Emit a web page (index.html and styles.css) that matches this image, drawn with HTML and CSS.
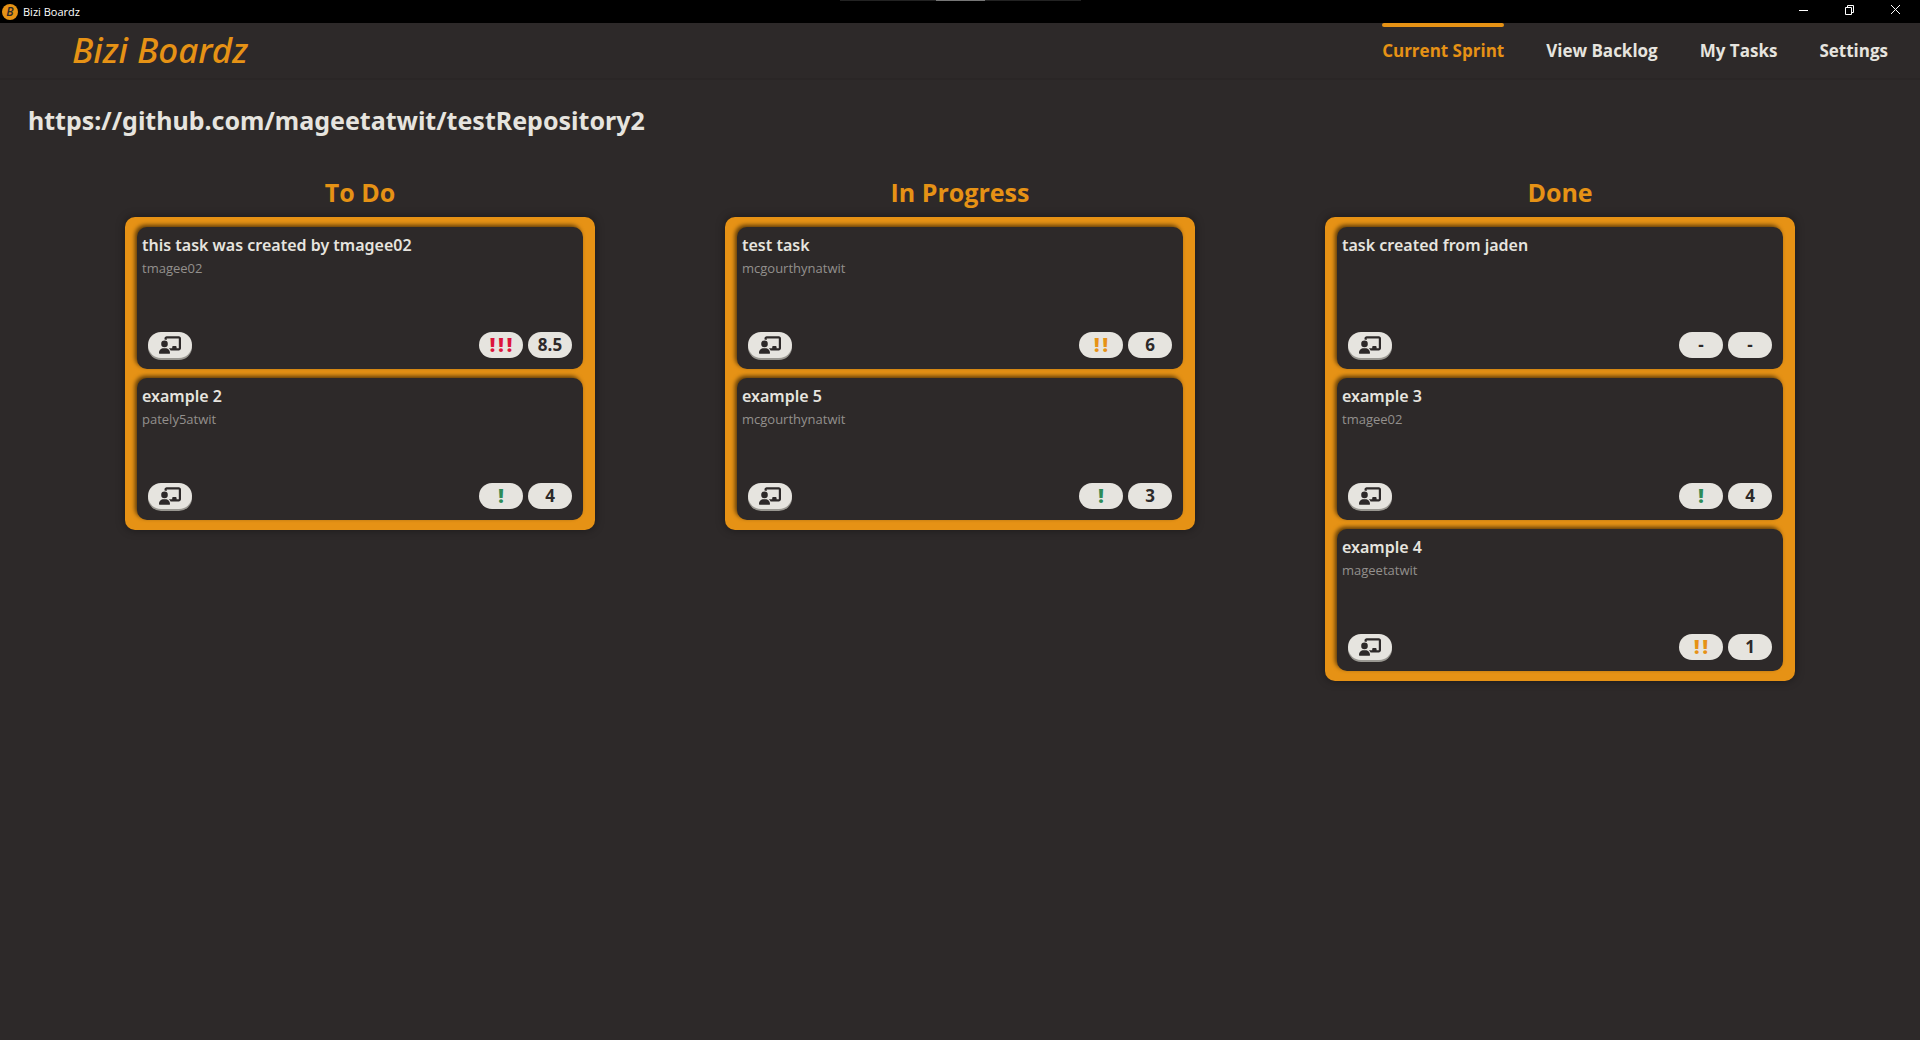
FILE: index.html
```html
<!DOCTYPE html>
<html lang="en">
<head>
<meta charset="utf-8">
<title>Bizi Boardz</title>
<link rel="stylesheet" href="styles.css">
</head>
<body>
<svg class="sprite" aria-hidden="true">
  <symbol id="assign" viewBox="0 0 640 512"><path d="M160 64c0-35.300 28.700-64 64-64H576c35.300 0 64 28.700 64 64V352c0 35.300-28.700 64-64 64H336.800c-11.800-25.500-29.900-47.500-52.400-64H384V320c0-17.700 14.300-32 32-32h64c17.700 0 32 14.300 32 32v32h64V64L224 64v49.100C205.200 102.200 183.300 96 160 96V64zm0 64a96 96 0 1 1 0 192 96 96 0 1 1 0-192zM133.300 352h53.300C260.300 352 320 411.700 320 485.300c0 14.700-11.900 26.700-26.700 26.700H26.700C11.900 512 0 500.100 0 485.300C0 411.700 59.700 352 133.300 352z"/></symbol>
</svg>
<div class="titlebar">
  <span class="app-icon">B</span>
  <span class="app-name">Bizi Boardz</span>
  <div class="drag-handle"></div>
  <div class="window-controls">
    <button type="button" aria-label="Minimize"><svg width="11" height="11" viewBox="0 0 11 11"><path d="M1 6.500h9"/></svg></button>
    <button type="button" aria-label="Restore"><svg width="11" height="11" viewBox="0 0 11 11"><path d="M1.500 3.500h6v7h-6zM3.500 3V1.500h6v7H8"/></svg></button>
    <button type="button" aria-label="Close"><svg width="11" height="11" viewBox="0 0 11 11"><path d="M1 1l9 9M10 1l-9 9"/></svg></button>
  </div>
</div>
<header class="header">
  <div class="brand">Bizi Boardz</div>
  <nav class="nav">
    <a class="active" href="#sprint">Current Sprint</a>
    <a href="#backlog">View Backlog</a>
    <a href="#tasks">My Tasks</a>
    <a href="#settings">Settings</a>
  </nav>
</header>
<main>
  <h1 class="repo">https://github.com/mageetatwit/testRepository2</h1>
  <div class="columns">
    <section class="column">
      <h2>To Do</h2>
      <div class="board">
        <article class="card">
          <h3>this task was created by tmagee02</h3>
          <p>tmagee02</p>
          <footer><button type="button" class="pill assign" aria-label="Assign"><svg><use href="#assign"/></svg></button><span class="pill marks high"><span>!</span><span>!</span><span>!</span></span><span class="pill">8.5</span></footer>
        </article>
        <article class="card">
          <h3>example 2</h3>
          <p>pately5atwit</p>
          <footer><button type="button" class="pill assign" aria-label="Assign"><svg><use href="#assign"/></svg></button><span class="pill marks low"><span>!</span></span><span class="pill">4</span></footer>
        </article>
      </div>
    </section>
    <section class="column">
      <h2>In Progress</h2>
      <div class="board">
        <article class="card">
          <h3>test task</h3>
          <p>mcgourthynatwit</p>
          <footer><button type="button" class="pill assign" aria-label="Assign"><svg><use href="#assign"/></svg></button><span class="pill marks medium"><span>!</span><span>!</span></span><span class="pill">6</span></footer>
        </article>
        <article class="card">
          <h3>example 5</h3>
          <p>mcgourthynatwit</p>
          <footer><button type="button" class="pill assign" aria-label="Assign"><svg><use href="#assign"/></svg></button><span class="pill marks low"><span>!</span></span><span class="pill">3</span></footer>
        </article>
      </div>
    </section>
    <section class="column">
      <h2>Done</h2>
      <div class="board">
        <article class="card">
          <h3>task created from jaden</h3>
          <p></p>
          <footer><button type="button" class="pill assign" aria-label="Assign"><svg><use href="#assign"/></svg></button><span class="pill">-</span><span class="pill">-</span></footer>
        </article>
        <article class="card">
          <h3>example 3</h3>
          <p>tmagee02</p>
          <footer><button type="button" class="pill assign" aria-label="Assign"><svg><use href="#assign"/></svg></button><span class="pill marks low"><span>!</span></span><span class="pill">4</span></footer>
        </article>
        <article class="card">
          <h3>example 4</h3>
          <p>mageetatwit</p>
          <footer><button type="button" class="pill assign" aria-label="Assign"><svg><use href="#assign"/></svg></button><span class="pill marks medium"><span>!</span><span>!</span></span><span class="pill">1</span></footer>
        </article>
      </div>
    </section>
  </div>
</main>
</body>
</html>
```
FILE: styles.css
```css
:root {
  --dark: #2d2929;
  --light: #e6e4df;
  --orange: #e69215;
}

* { box-sizing: border-box; }

body {
  margin: 0;
  min-height: 100vh;
  background: var(--dark);
  color: var(--light);
  font-family: "Segoe UI", "Open Sans", "Noto Sans", sans-serif;
}

h1, h2, h3, p { margin: 0; }

button {
  border: 0;
  padding: 0;
  background: none;
  color: inherit;
  font: inherit;
}

.sprite { display: none; }

/* Window title bar */
.titlebar {
  position: relative;
  display: flex;
  align-items: center;
  height: 23px;
  padding-left: 2px;
  background: #000;
  color: #fff;
}

.app-icon {
  width: 16px;
  height: 16px;
  margin-right: 5px;
  border-radius: 50%;
  background: var(--orange);
  color: var(--dark);
  font-size: 12px;
  font-style: italic;
  font-weight: 600;
  line-height: 16px;
  text-align: center;
}

.app-name {
  font-size: 11px;
  line-height: 16px;
}

.drag-handle {
  position: absolute;
  top: 0;
  left: 50%;
  width: 241px;
  height: 1px;
  margin-left: -120px;
  background: linear-gradient(90deg, #222 40%, #777 40% 60%, #222 60%);
}

.window-controls {
  display: flex;
  margin-left: auto;
  padding-right: 2px;
}

.window-controls button {
  display: grid;
  place-items: center;
  width: 46px;
  height: 22px;
  padding-bottom: 4px;
}

.window-controls path {
  fill: none;
  stroke: #fff;
}

/* Header */
.header {
  display: flex;
  justify-content: space-between;
  height: 57px;
  padding: 0 32px 0 72px;
  border-bottom: 2px solid #2a2626;
}

.brand,
.repo,
.card h3 {
  font-family: "Segoe UI", "Noto Sans", sans-serif;
}

.brand {
  color: var(--orange);
  font-size: 35px;
  font-style: italic;
  font-weight: 500;
  line-height: 54px;
}

.nav {
  display: flex;
  gap: 42px;
}

.nav a {
  color: var(--light);
  font-size: 17px;
  font-weight: 700;
  line-height: 48px;
  text-decoration: none;
}

.nav a::before {
  content: "";
  display: block;
  height: 4px;
  border-radius: 2px;
}

.nav .active { color: var(--orange); }

.nav .active::before { background: var(--orange); }

/* Sprint board */
.repo {
  padding: 22px 28px 0;
  font-size: 25px;
  font-weight: 700;
  line-height: 36px;
}

.columns {
  display: grid;
  grid-template-columns: repeat(3, 1fr);
  align-items: start;
  padding: 36px 60px;
}

.column { padding: 0 65px; }

.column h2 {
  color: var(--orange);
  font-size: 25px;
  font-weight: 700;
  line-height: 36px;
  text-align: center;
}

.board {
  display: grid;
  gap: 9px;
  margin-top: 7px;
  padding: 10px 12px;
  border-radius: 10px;
  background: var(--orange);
  box-shadow: 0 0 10px rgba(0, 0, 0, 0.4);
}

.card {
  display: flex;
  flex-direction: column;
  min-height: 142px;
  padding: 5px 11px 11px 5px;
  border-radius: 10px;
  background: var(--dark);
  box-shadow: -2px -2px 4px rgba(0, 0, 0, 0.6);
}

.card h3 {
  font-size: 16px;
  font-weight: 600;
  line-height: 26px;
}

.card p {
  color: #93908d;
  font-size: 13px;
  font-weight: 500;
  line-height: 20px;
}

.card footer {
  display: flex;
  gap: 5px;
  margin-top: auto;
  padding-left: 6px;
}

.pill {
  display: flex;
  align-items: center;
  justify-content: center;
  width: 44px;
  height: 26px;
  border-radius: 13px;
  background: var(--light);
  color: var(--dark);
  font-size: 17px;
  font-weight: 700;
  line-height: 26px;
}

.assign {
  margin-right: auto;
  box-shadow: 0 2px #999791;
}

.assign svg {
  width: 22px;
  height: 18px;
  fill: currentColor;
}

.marks {
  gap: 3px;
  font-family: "Segoe UI", "Noto Sans", sans-serif;
  font-size: 19px;
  font-weight: 900;
}

.high { color: #dc143c; }
.medium { color: var(--orange); }
.low { color: #2e8b57; }
```
